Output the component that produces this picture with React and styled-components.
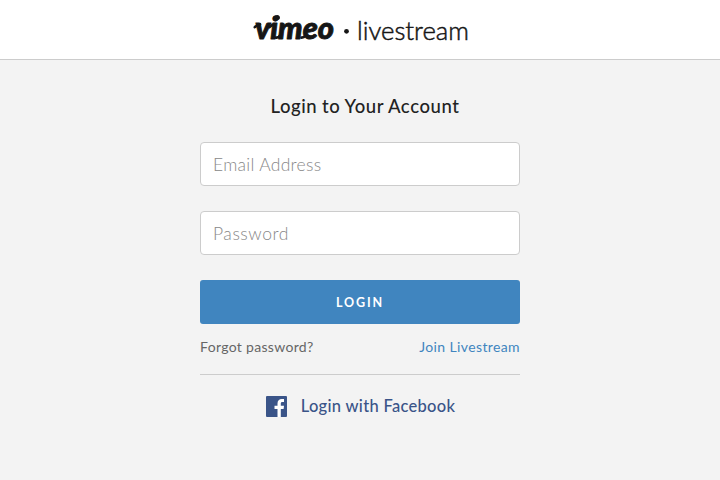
import React from "react";
import styled, { createGlobalStyle } from "styled-components";

const GlobalStyle = createGlobalStyle`
  * { box-sizing: border-box; }
  body {
    margin: 0;
    min-height: 100vh;
    background: #f3f3f3;
    font-family: Lato, "Open Sans", sans-serif;
    color: #222;
  }
`;

const Header = styled.header`
  display: flex;
  justify-content: center;
  height: 60px;
  background: #fff;
  border-bottom: 1px solid #ccc;
`;

const Brand = styled.svg`
  display: block;
  width: 220px;
  height: 58px;
  margin-left: 2px;
  fill: #161616;
`;

const Vimeo = styled.text`
  font: italic 900 31px Lato, sans-serif;
  stroke: #161616;
  stroke-width: 0.9px;
  stroke-linejoin: round;
`;

const Flourish = styled.path`
  fill: none;
  stroke: #161616;
  stroke-width: 2.6px;
  stroke-linecap: round;
`;

const Livestream = styled.text`
  font: 300 26px Lato, sans-serif;
  stroke: #161616;
  stroke-width: 0.5px;
`;

const Panel = styled.main`
  display: flex;
  flex-direction: column;
  width: 320px;
  margin: 0 auto;
`;

const Title = styled.h1`
  margin: 34px 0 24px;
  padding-left: 10px;
  font-size: 18.5px;
  font-weight: 500;
  line-height: 24px;
  letter-spacing: 0.6px;
  word-spacing: -0.5px;
  text-align: center;
  white-space: nowrap;
`;

const Form = styled.form`
  display: flex;
  flex-direction: column;
  gap: 25px;
`;

const Input = styled.input`
  width: 100%;
  height: 44px;
  padding: 0 12px;
  border: 1px solid #ccc;
  border-radius: 4px;
  background: #fff;
  font: 300 17.5px Lato, sans-serif;
  letter-spacing: ${({ $tracking }) => $tracking};
  outline: none;

  &::placeholder { color: #888; opacity: 1; }
`;

const Submit = styled.button`
  height: 44px;
  padding: 0;
  border: 0;
  border-radius: 3px;
  background: #4085bf;
  color: #fff;
  font: 700 12.5px Lato, sans-serif;
  letter-spacing: 1.9px;
`;

const Links = styled.nav`
  display: flex;
  justify-content: space-between;
  height: 51px;
  padding-top: 13px;
  border-bottom: 1px solid #ccc;
`;

const Link = styled.a`
  color: ${({ $color }) => $color};
  font-size: 14px;
  font-weight: 400;
  line-height: 20px;
  letter-spacing: ${({ $tracking }) => $tracking};
  text-decoration: none;
`;

const FacebookLogin = styled.a`
  display: flex;
  align-items: center;
  justify-content: center;
  gap: 14px;
  height: 21px;
  margin-top: 21px;
  color: #3a5488;
  font-size: 16.5px;
  font-weight: 500;
  letter-spacing: 0.3px;
  text-decoration: none;
`;

const FacebookIcon = styled.svg`
  display: block;
  width: 21px;
  height: 21px;
  flex: none;
`;

const FacebookLabel = styled.span`
  line-height: 20px;
  padding-bottom: 1px;
  margin-right: -1px;
`;

export default function App() {
  return (
    <>
      <GlobalStyle />
      <Header>
        <Brand viewBox="251 0 220 58">
          <Flourish d="M254.8 27.2Q257.5 24.4 260 24.4M269.5 27.2Q271.5 25 274 24.2M276 37.6Q278.5 38 280 35.5M301.5 37.6Q304 37.5 305.5 35.5" />
          <Vimeo x="255" y="39" textLength="79" lengthAdjust="spacingAndGlyphs">vimeo</Vimeo>
          <ellipse cx="276.5" cy="17.8" rx="3.5" ry="2.7" transform="rotate(-18 276.5 17.8)" />
          <circle cx="346.5" cy="31.3" r="2.4" />
          <Livestream x="357" y="39.5" textLength="112" lengthAdjust="spacingAndGlyphs">livestream</Livestream>
        </Brand>
      </Header>
      <Panel>
        <Title>Login to Your Account</Title>
        <Form>
          <Input type="email" placeholder="Email Address" $tracking="0.3px" />
          <Input type="password" placeholder="Password" $tracking="0.55px" />
          <Submit type="button">LOGIN</Submit>
        </Form>
        <Links>
          <Link $color="#666" $tracking="0.32px">Forgot password?</Link>
          <Link $color="#4085bf" $tracking="0.38px">Join Livestream</Link>
        </Links>
        <FacebookLogin>
          <FacebookIcon viewBox="0 0 21 21">
            <rect width="21" height="21" rx="1" fill="#3a5488" />
            <path d="M11.5 21v-8H8.5V9.8h3V7.5C11.5 4.6 13.2 3 15.8 3h2.2v3h-1.6c-1.2 0-1.6.6-1.6 1.6v2.2H18l-.4 3.2h-2.8v8z" fill="#fff" />
          </FacebookIcon>
          <FacebookLabel>Login with Facebook</FacebookLabel>
        </FacebookLogin>
      </Panel>
    </>
  );
}
